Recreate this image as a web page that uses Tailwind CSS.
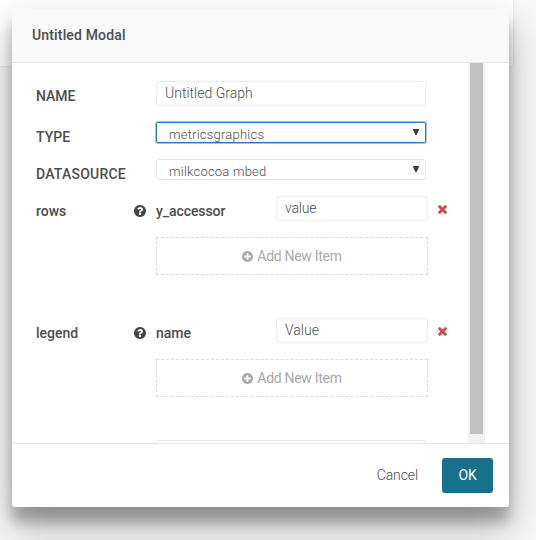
<!DOCTYPE html>
<html lang="en">
<head>
<meta charset="utf-8">
<title>Untitled Modal</title>
<script src="https://cdn.jsdelivr.net/npm/@tailwindcss/browser@4"></script>
</head>
<body class="relative h-[540px] w-[536px] overflow-hidden bg-[#f7f7f7] font-['Roboto',sans-serif] text-[14px] leading-5 text-[#4d4d4d]">
<svg class="hidden">
  <symbol id="help" viewBox="128 128 1536 1536"><path d="M1024 1376v-192q0-14-9-23t-23-9h-192q-14 0-23 9t-9 23v192q0 14 9 23t23 9h192q14 0 23-9t9-23zm256-672q0-88-55.5-163t-138.5-116-170-41q-243 0-371 213-15 24 8 42l132 100q7 6 19 6 16 0 25-12 53-68 86-92 34-24 86-24 48 0 85.5 26t37.5 59q0 38-20 61t-68 45q-63 28-115.5 86.5t-52.5 125.5v36q0 14 9 23t23 9h192q14 0 23-9t9-23q0-19 21.5-49.5t54.5-49.5q32-18 49-28.5t46-35 44.5-48 28-60.5 12.5-81zm384 192q0 209-103 385.5t-279.5 279.5-385.5 103-385.5-103-279.5-279.5-103-385.5 103-385.5 279.5-279.5 385.5-103 385.5 103 279.5 279.5 103 385.5z"/></symbol>
  <symbol id="plus" viewBox="128 128 1536 1536"><path d="M1344 960v-128q0-26-19-45t-45-19h-256v-256q0-26-19-45t-45-19h-128q-26 0-45 19t-19 45v256h-256q-26 0-45 19t-19 45v128q0 26 19 45t45 19h256v256q0 26 19 45t45 19h128q26 0 45-19t19-45v-256h256q26 0 45-19t19-45zm320-64q0 209-103 385.5t-279.5 279.5-385.5 103-385.5-103-279.5-279.5-103-385.5 103-385.5 279.5-279.5 385.5-103 385.5 103 279.5 279.5 103 385.5z"/></symbol>
  <symbol id="times" viewBox="302 366 1188 1188"><path d="M1490 1322q0 40-28 68l-136 136q-28 28-68 28t-68-28l-294-294-294 294q-28 28-68 28t-68-28l-136-136q-28-28-28-68t28-68l294-294-294-294q-28-28-28-68t28-68l136-136q28-28 68-28t68 28l294 294 294-294q28-28 68-28t68 28l136 136q28 28 28 68t-28 68l-294 294 294 294q28 28 28 68z"/></symbol>
</svg>

<!-- Page panel behind the dialog -->
<div class="absolute top-0 left-0 h-[66px] w-[513px] bg-white shadow-[0_0_2px_rgba(0,0,0,0.18)]"></div>

<div class="relative mt-[9px] ml-3 flex h-[498px] w-[497px] flex-col overflow-visible rounded-[3px] bg-white shadow-[0_19px_38px_rgba(0,0,0,0.30),0_15px_12px_rgba(0,0,0,0.22)]">
  <header class="h-[54px] shrink-0 rounded-t-[3px] border-b border-[#e8e8e8] bg-[#f9f9f9] pt-4 pl-5 font-medium tracking-[0.16px]">Untitled Modal</header>

  <div class="flex h-[380px] shrink-0 overflow-hidden">
    <div class="w-[456px] shrink-0 pt-[18px] pl-6">
      <div class="mb-4 flex h-[25px]">
        <div class="w-[120px] pt-[5px] font-medium">NAME</div>
        <div class="w-[270px] rounded-[3px] border border-[#ebebeb] pt-px pl-2 font-light">Untitled Graph</div>
      </div>
      <div class="mb-4 flex h-[21px]">
        <div class="w-[120px] pt-[5px] font-medium">TYPE</div>
        <div class="flex w-[270px] justify-between rounded-[2px] border border-[#2b78c4] pt-[2px] pr-[6px] pl-3 text-[13px] leading-5 font-light tracking-[0.22px] shadow-[0_0_0_1px_#9ac5f4]">metricsgraphics
          <svg class="mt-[4px] h-[6px] w-[6px]" viewBox="0 0 6 6" fill="#404040"><path d="M0 0h6v1L3.6 6H2.4L0 1z"/></svg>
        </div>
      </div>
      <div class="mb-4 flex h-[21px]">
        <div class="w-[120px] pt-[5px] font-medium tracking-[0.22px]">DATASOURCE</div>
        <div class="flex w-[270px] justify-between rounded-[3px] border border-[#e5e5e5] pt-[2px] pr-[6px] pl-3 text-[13px] leading-5 font-light tracking-[0.22px]">milkcocoa mbed
          <svg class="mt-[4px] h-[6px] w-[6px]" viewBox="0 0 6 6" fill="#404040"><path d="M0 0h6v1L3.6 6H2.4L0 1z"/></svg>
        </div>
      </div>

      <div class="mb-4 flex h-[25px]">
        <div class="w-[98px] pt-[5px] font-medium">rows</div>
        <svg class="mt-[9px] mr-[10px] h-3 w-3 fill-[#444]"><use href="#help"/></svg>
        <div class="w-[120px] pt-[5px] font-medium tracking-[-0.08px]">y_accessor</div>
        <div class="w-[152px] rounded-[3px] border border-[#ebebeb] pt-px pl-2 font-light tracking-[-0.2px]">value</div>
        <svg class="mt-[9px] ml-[10px] h-[9px] w-[9px] fill-[#d04a4a]"><use href="#times"/></svg>
      </div>
      <div class="mb-[43px] ml-[120px] flex h-[38px] w-[272px] items-center justify-center gap-1 border border-dashed border-[#dadada] text-[#aaa]">
        <svg class="h-[11px] w-[11px] fill-[#aaa]"><use href="#plus"/></svg><span class="tracking-[-0.3px]">Add New Item</span>
      </div>

      <div class="mb-4 flex h-[25px]">
        <div class="w-[98px] pt-[5px] font-medium">legend</div>
        <svg class="mt-[9px] mr-[10px] h-3 w-3 fill-[#444]"><use href="#help"/></svg>
        <div class="w-[120px] pt-[5px] font-medium">name</div>
        <div class="w-[152px] rounded-[3px] border border-[#ebebeb] pt-px pl-2 font-light">Value</div>
        <svg class="mt-[9px] ml-[10px] h-[9px] w-[9px] fill-[#d04a4a]"><use href="#times"/></svg>
      </div>
      <div class="mb-[43px] ml-[120px] flex h-[38px] w-[272px] items-center justify-center gap-1 border border-dashed border-[#dadada] text-[#aaa]">
        <svg class="h-[11px] w-[11px] fill-[#aaa]"><use href="#plus"/></svg><span class="tracking-[-0.3px]">Add New Item</span>
      </div>
      <div class="ml-[120px] h-[25px] w-[270px] rounded-[3px] border border-[#e5e5e5]"></div>
    </div>
    <div class="h-[380px] w-[17px] bg-[#f1f1f1] px-[2px]"><div class="h-[371px] bg-[#c1c1c1]"></div></div>
  </div>

  <footer class="flex h-16 shrink-0 justify-end border-t border-[#e5e5e5] pt-[14px] pr-4">
    <div class="mr-6 pt-[7px] font-light tracking-[-0.1px]">Cancel</div>
    <div class="h-[35px] w-[51px] rounded-[3px] bg-[#18718a] pt-[7px] text-center tracking-[-0.3px] text-white">OK</div>
  </footer>
</div>
</body>
</html>
